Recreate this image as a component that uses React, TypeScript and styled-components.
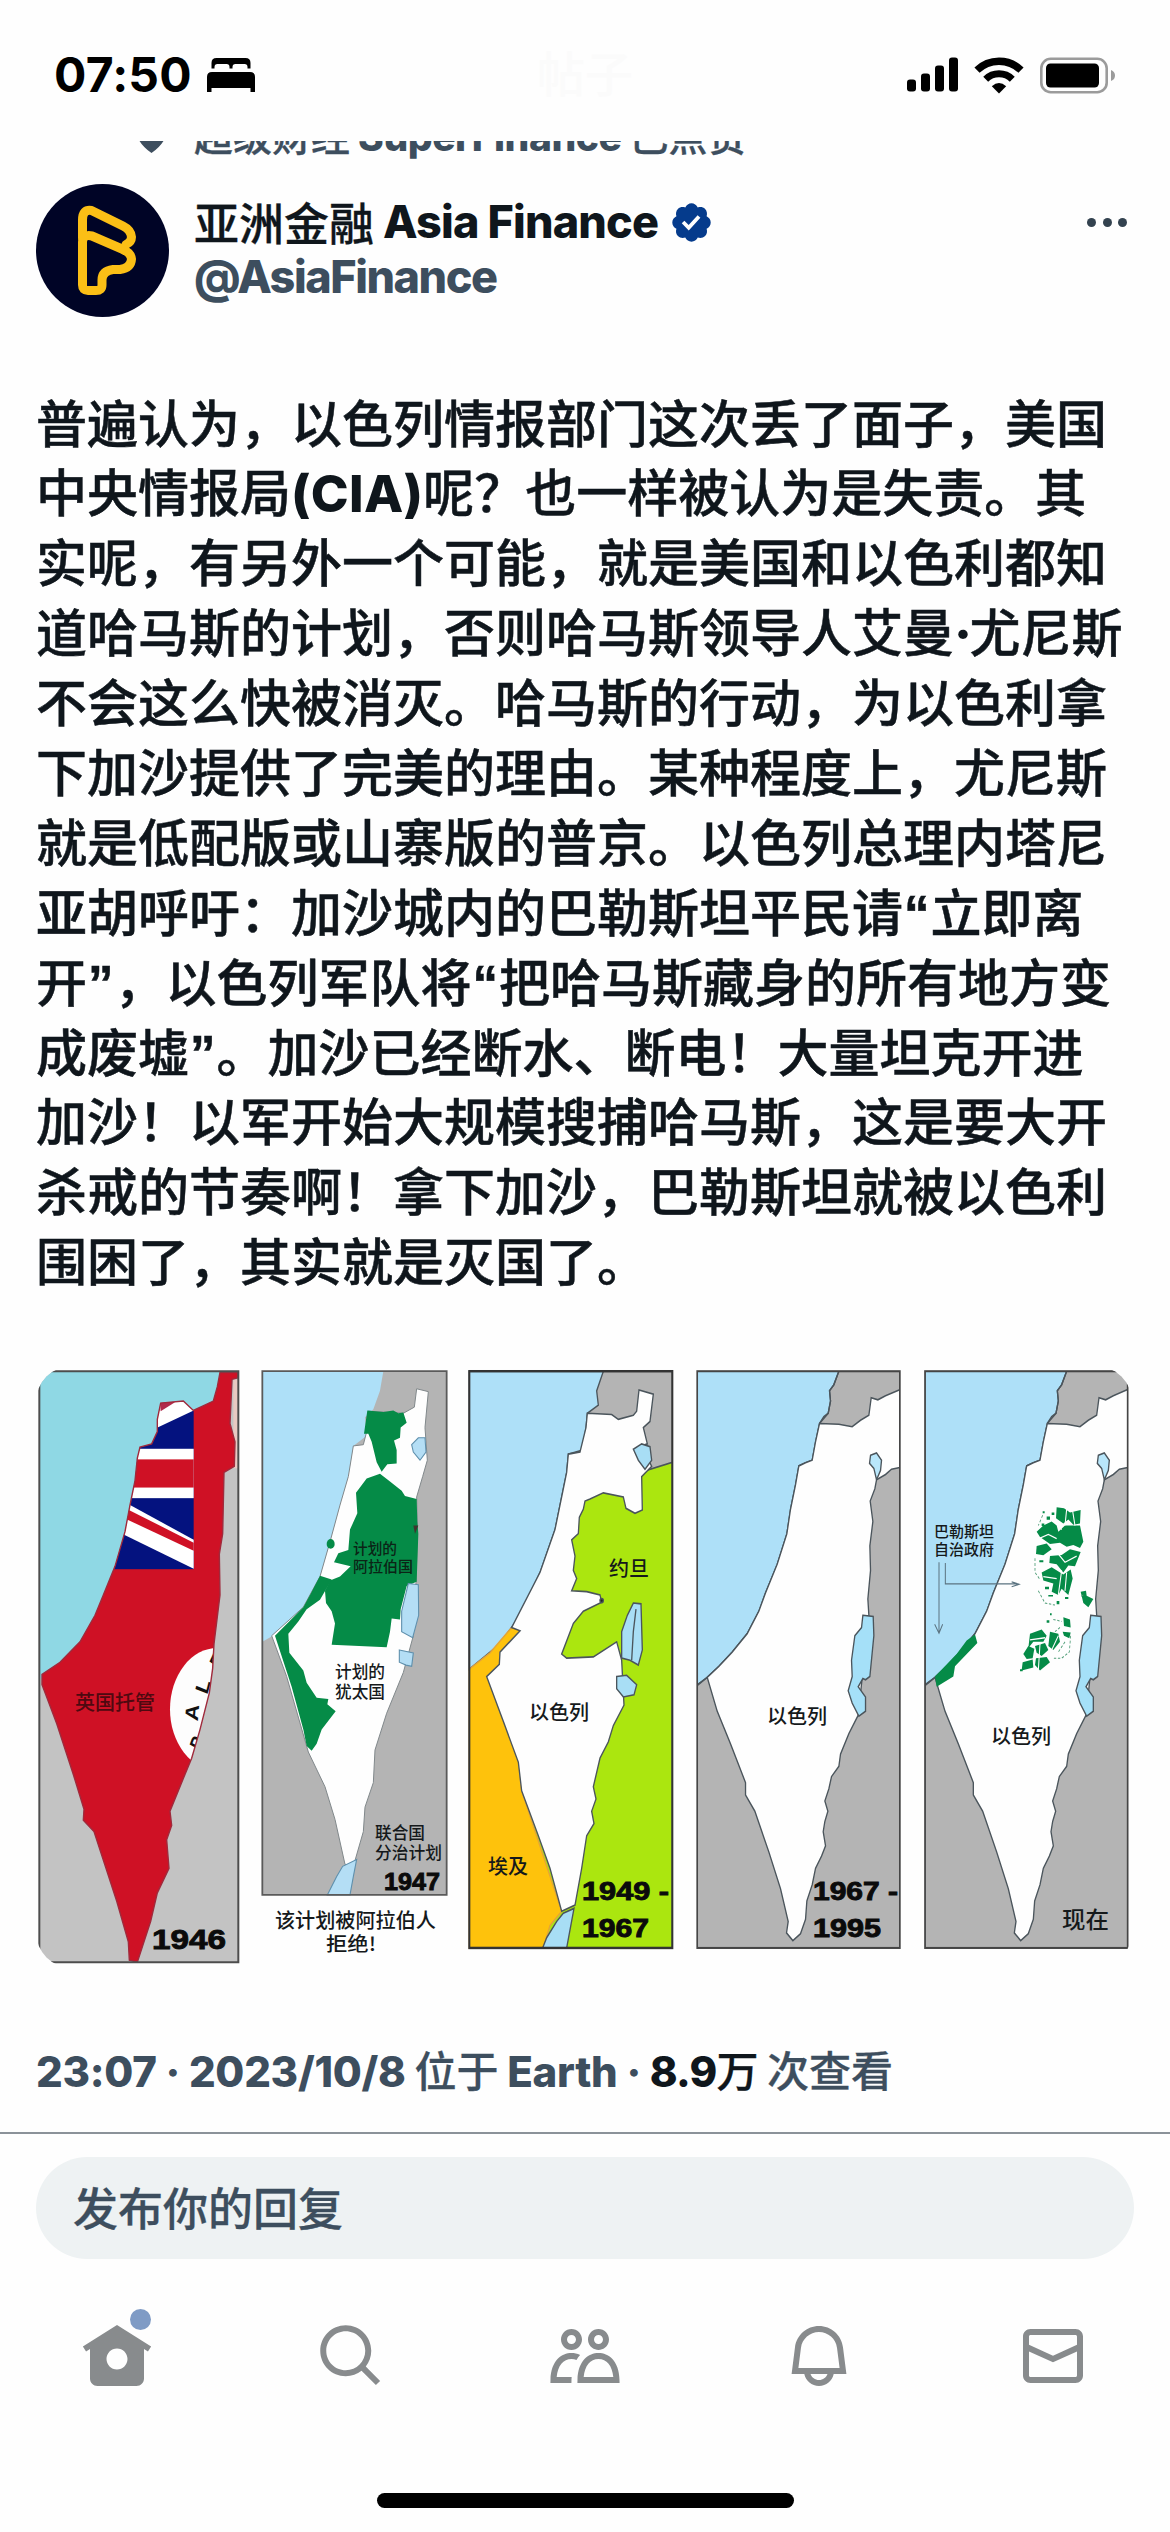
import React from "react";
import styled, { createGlobalStyle } from "styled-components";

const FONT = `Inter, "Noto Sans CJK SC", sans-serif`;
const INK = "#0f161c";
const SLATE = "#3d4e5e";

const GlobalStyle = createGlobalStyle`
  body { margin: 0; background: #fdfdfd; font-family: ${FONT}; }
  * { box-sizing: border-box; }
`;

const Screen = styled.div`
  width: 1170px;
  height: 2532px;
  display: flex;
  flex-direction: column;
  overflow: hidden;
  background: #fefefe;
`;

const StatusBar = styled.header`
  height: 141px;
  flex: none;
  display: grid;
  grid-template-columns: 1fr auto 1fr;
  align-items: start;
  padding: 45px 54px 0;
`;

const StatusLeft = styled.div`
  display: flex;
  align-items: center;
  gap: 14px;
`;

const Clock = styled.span`
  font-size: 48px;
  line-height: 60px;
  font-weight: 700;
  color: #000;
  letter-spacing: 0.2px;
`;

const GhostTitle = styled.span`
  font-size: 48px;
  line-height: 60px;
  font-weight: 500;
  color: #fbfbfb;
`;

const StatusRight = styled.div`
  display: flex;
  justify-content: flex-end;
  align-items: center;
  height: 60px;
  gap: 16px;
`;

const Post = styled.article`
  flex: none;
  height: 1991px;
  display: flex;
  flex-direction: column;
  padding: 0 36px;
`;

const LikedRow = styled.div`
  height: 43px;
  flex: none;
  display: flex;
  align-items: flex-end;
  overflow: hidden;
  padding: 0 0 22px 101px;
  gap: 28px;
  color: ${SLATE};
  font-size: 39px;
  font-weight: 700;
  line-height: 50px;
  white-space: nowrap;
  svg { flex: none; margin-bottom: 9px; }
`;

const Author = styled.div`
  display: flex;
  height: 133px;
  flex: none;
`;

const Names = styled.div`
  display: flex;
  flex-direction: column;
  margin-left: 25px;
  padding-top: 11px;
  flex: 1;
`;

const NameLine = styled.div`
  display: flex;
  align-items: center;
  height: 54px;
  font-size: 45px;
  line-height: 54px;
  color: ${INK};
  white-space: nowrap;
`;

const Handle = styled.div`
  height: 54px;
  font-size: 45px;
  line-height: 56px;
  color: ${SLATE};
  font-weight: 800;
  letter-spacing: -1.45px;
`;

const Cjk = styled.span`
  font-family: "Noto Sans CJK SC", sans-serif;
  font-weight: 500;
  -webkit-text-stroke: 0.3px currentColor;
`;

const Latin = styled.span<{ $track?: number }>`
  font-weight: 800;
  letter-spacing: ${(p) => p.$track ?? 0}px;
  white-space: pre;
`;

const MoreButton = styled.div`
  display: flex;
  gap: 6.5px;
  padding: 34px 7px 0 0;
`;

const MoreDot = styled.i`
  width: 9px;
  height: 9px;
  border-radius: 50%;
  background: #33424f;
`;

const Body = styled.div`
  margin-top: 72.5px;
  height: 908.5px;
  display: flex;
  flex-direction: column;
  flex: none;
`;

const Line = styled.p`
  margin: 0;
  height: 69.9px;
  line-height: 69.9px;
  font-size: 51px;
  font-weight: 500;
  color: ${INK};
  white-space: nowrap;
  -webkit-text-stroke: 0.5px ${INK};
`;

const Run = styled.b`
  font-weight: 800;
  letter-spacing: 0.3px;
  -webkit-text-stroke: 0;
`;

const MidDot = styled(Run)`
  letter-spacing: -2.5px;
`;

const Quote = styled.b`
  display: inline-block;
  width: 27.5px;
  text-align: center;
  font-family: "Liberation Sans", sans-serif;
  font-weight: 700;
`;

const Picture = styled.svg`
  display: block;
  flex: none;
  width: 1096px;
  height: 602px;
  margin-top: 68px;
  border-radius: 36px;
`;

const Meta = styled.div`
  margin-top: 71px;
  height: 60px;
  line-height: 60px;
  font-size: 42px;
  color: ${SLATE};
  white-space: pre;
`;

const Views = styled.span`
  color: ${INK};
`;

const ReplyDock = styled.div`
  flex: none;
  border-top: 2px solid #8b9299;
  padding: 23px 36px 0;
`;

const ReplyField = styled.div`
  height: 102px;
  border-radius: 51px;
  background: #eef2f3;
  color: ${SLATE};
  padding-left: 37px;
  font-size: 45px;
  line-height: 99px;
`;

const Tabs = styled.nav`
  flex: none;
  display: grid;
  grid-template-columns: repeat(5, 234px);
  justify-items: center;
  margin-top: 61px;
  height: 173px;
`;

const Tab = styled.div`
  position: relative;
  width: 72px;
  height: 72px;
`;

const Unread = styled.i`
  position: absolute;
  left: 49px;
  top: -11px;
  width: 21px;
  height: 21px;
  border-radius: 50%;
  background: #7f9bc5;
`;

const HomeIndicator = styled.div`
  flex: none;
  align-self: center;
  width: 417px;
  height: 15px;
  border-radius: 8px;
  background: #000;
`;

const TAB_ICONS = [
  "M12 1.696L.622 8.807l1.06 1.696L3 9.679V19.5C3 20.881 4.119 22 5.5 22h13c1.381 0 2.5-1.119 2.5-2.5V9.679l1.318.824 1.06-1.696L12 1.696zM12 16.5c-1.933 0-3.5-1.567-3.5-3.5s1.567-3.5 3.5-3.5 3.5 1.567 3.5 3.5-1.567 3.5-3.5 3.5z",
  "M10.25 3.75c-3.59 0-6.5 2.91-6.5 6.5s2.91 6.5 6.5 6.5c1.795 0 3.419-.726 4.596-1.904 1.178-1.177 1.904-2.801 1.904-4.596 0-3.59-2.91-6.5-6.5-6.5zm-8.5 6.5c0-4.694 3.806-8.5 8.5-8.5s8.5 3.806 8.5 8.5c0 1.986-.682 3.815-1.824 5.262l4.781 4.781-1.414 1.414-4.781-4.781c-1.447 1.142-3.276 1.824-5.262 1.824-4.694 0-8.5-3.806-8.5-8.5z",
  "M7.501 19.917L7.471 21H.472l.029-1.027c.184-6.618 3.736-8.977 7-8.977.963 0 1.95.212 2.87.672-.444.478-.851 1.03-1.212 1.656-.507-.204-1.054-.329-1.658-.329-2.767 0-4.57 2.223-4.938 6.004H7.56c-.023.302-.05.599-.059.918zm15.998.056L23.528 21H9.472l.029-1.027c.184-6.618 3.736-8.977 7-8.977s6.816 2.358 7 8.977zM21.437 19c-.367-3.781-2.17-6.004-4.938-6.004s-4.57 2.223-4.938 6.004h9.875zm-4.938-9c-.799 0-1.527-.279-2.116-.73-.836-.64-1.384-1.638-1.384-2.77 0-1.93 1.567-3.5 3.5-3.5s3.5 1.57 3.5 3.5c0 1.132-.548 2.13-1.384 2.77-.589.451-1.317.73-2.116.73zm-1.5-3.5c0 .827.673 1.5 1.5 1.5s1.5-.673 1.5-1.5-.673-1.5-1.5-1.5-1.5.673-1.5 1.5zM7.5 3C9.433 3 11 4.57 11 6.5S9.433 10 7.5 10 4 8.43 4 6.5 5.567 3 7.5 3zm0 2C6.673 5 6 5.673 6 6.5S6.673 8 7.5 8 9 7.327 9 6.5 8.327 5 7.5 5z",
  "M19.993 9.042C19.48 5.017 16.054 2 11.996 2s-7.49 3.021-7.999 7.051L2.866 18H7.1c.463 2.282 2.481 4 4.9 4s4.437-1.718 4.9-4h4.236l-1.143-8.958zM12 20c-1.306 0-2.417-.835-2.829-2h5.658c-.412 1.165-1.523 2-2.829 2zm-6.866-4l.847-6.698C6.364 6.272 8.941 4 11.996 4s5.627 2.268 6.013 5.295L18.864 16H5.134z",
  "M1.998 5.5c0-1.381 1.119-2.5 2.5-2.5h15c1.381 0 2.5 1.119 2.5 2.5v13c0 1.381-1.119 2.5-2.5 2.5h-15c-1.381 0-2.5-1.119-2.5-2.5v-13zm2.5-.5c-.276 0-.5.224-.5.5v2.764l8 3.638 8-3.636V5.5c0-.276-.224-.5-.5-.5h-15zm15.5 5.463l-8 3.636-8-3.638V18.5c0 .276.224.5.5.5h15c.276 0 .5-.224.5-.5v-8.037z",
];

const BedIcon = () => (
  <svg width="50" height="36" viewBox="0 0 50 36">
    <path d="M5.500 11.500V6Q5.500 1 10.500 1H39.500Q44.500 1 44.500 6V11.500H41.500V10Q41.500 7 38.500 7H29.500Q26.500 7 26.500 10V11.500H23.500V10Q23.500 7 20.500 7H11.500Q8.500 7 8.500 10V11.500Z" />
    <path d="M1 20Q1 15 6 15H44Q49 15 49 20V35H44.500V31H5.500V35H1Z" />
  </svg>
);

const SignalIcon = () => (
  <svg width="51" height="36" viewBox="0 0 51 36">
    <rect x="0" y="22.500" width="9" height="12" rx="3" />
    <rect x="14" y="16.500" width="9" height="18" rx="3" />
    <rect x="28" y="8.500" width="9" height="26" rx="3" />
    <rect x="42" y="0.500" width="9" height="34" rx="3" />
  </svg>
);

const WifiIcon = () => (
  <svg width="50" height="38" viewBox="0 0 50 38">
    <g fill="none" stroke="#000">
      <path d="M3 14.200a31.500 31.500 0 0 1 44 0" strokeWidth="7.400" />
      <path d="M11.700 23.200a19 19 0 0 1 26.600 0" strokeWidth="7" />
    </g>
    <path d="M25 37.500 17.800 30.200Q25 24 32.200 30.200Z" strokeLinejoin="round" />
  </svg>
);

const BatteryIcon = () => (
  <svg width="76" height="37" viewBox="0 0 76 37">
    <rect x="1.300" y="1.800" width="65.400" height="33.400" rx="9.500" fill="none" stroke="#9b9b9b" strokeWidth="2.600" />
    <rect x="6" y="6.500" width="53" height="24" rx="4.500" />
    <path d="M71 13q4 1.500 4 5.500t-4 5.500z" fill="#9b9b9b" />
  </svg>
);

const Avatar = () => (
  <svg width="133" height="133" viewBox="0 0 133 133">
    <circle cx="66.500" cy="66.500" r="66.500" fill="#000426" />
    <g fill="none" stroke="#fbbf16" strokeWidth="9" strokeLinejoin="round" strokeLinecap="round">
      <path d="M46.500 54V36Q46.500 25 55.500 26.500L87 42Q95 46 95.500 53Q95.500 58 90 60.500" />
      <path d="M46.500 58Q47 50 56 52L86 65Q95 69 95.500 75Q95 84 84 85.500H77Q66 87 66 96V101Q66 106.500 60 106.500H52Q46.500 106.500 46.500 101Z" />
    </g>
  </svg>
);

const VerifiedMark = styled.svg`
  width: 45px;
  height: 45px;
  margin-left: 11px;
`;

const VerifiedIcon = () => (
  <VerifiedMark viewBox="0 0 24 24">
    <path
      fill="#053b8c"
      d="M22.25 12c0-1.430-.88-2.670-2.190-3.340.46-1.390.2-2.900-.81-3.910s-2.520-1.270-3.910-.81c-.66-1.310-1.910-2.190-3.340-2.190s-2.670.88-3.330 2.190c-1.400-.46-2.910-.2-3.920.81s-1.260 2.520-.8 3.910c-1.310.67-2.200 1.910-2.200 3.340s.89 2.670 2.200 3.340c-.46 1.390-.21 2.900.8 3.910s2.520 1.260 3.910.81c.67 1.310 1.910 2.190 3.340 2.190s2.680-.88 3.340-2.190c1.390.45 2.900.2 3.910-.81s1.270-2.520.81-3.910c1.310-.67 2.190-1.910 2.190-3.340zm-11.710 4.200L6.800 12.460l1.410-1.420 2.260 2.260 4.800-5.230 1.470 1.360-6.200 6.770z"
    />
  </VerifiedMark>
);

const SEA = "#aee0f8";
const GREY = "#b4b4b4";
const GREEN = "#058b47";
const LINE = "#4b555c";

interface LabelProps {
  x: number;
  y: number;
  w: number;
  size: number;
  fill?: string;
  children: string;
}

/* Place name, stretched to the width it takes on the map. */
const Place = ({ x, y, w, size, fill = "#15191b", children }: LabelProps) => (
  <text x={x} y={y} textLength={w} lengthAdjust="spacingAndGlyphs" fontFamily='"Noto Sans CJK SC", sans-serif' fontWeight="500" fontSize={size} fill={fill}>
    {children}
  </text>
);

const Year = ({ x, y, w, size, children }: LabelProps) => (
  <text x={x} y={y} textLength={w} lengthAdjust="spacingAndGlyphs" fontFamily='"Liberation Sans", Arial, sans-serif' fontWeight="700" fontSize={size} fill="#0b0b0b" stroke="#0b0b0b" strokeWidth="0.9">
    {children}
  </text>
);

const LAND_1946 =
  "M600 55L655 55 655 68 636 72 630 180 645 225 643 285 612 300 608 450 598 500 600 600 582 720 578 780 568 840 540 930 515 1000 490 1050 450 1130 455 1165 440 1200 447 1270 412 1330 392 1400 352 1500 328 1495 325 1450 290 1350 222 1180 190 1152 192 1125 160 1040 110 915 66 820 66 795 120 765 180 715 225 650 250 600 285 530 315 445 330 380 345 320 352 265 360 238 395 230 412 200 412 170 422 130 490 125 520 148 580 125 592 90Z";

const COAST_1967 =
  "1042 180 1030 225 1020 270 1000 276 980 284 970 330 955 390 944 450 915 525 880 595 860 640 825 695 780 740 740 775 705 802";

const Territory1967 = () => (
  <>
    <rect x="675" y="52" width="608" height="1413" fill={GREY} />
    <path d={`M675 52H1100L1085 85 1072 100 1075 125 1068 155 1055 163L${COAST_1967} 675 820Z`} fill={SEA} />
    <path d="M1100 52L1085 85 1072 100 1075 125 1068 155 1042 180M705 802L675 822" fill="none" />
    <path
      d={`M${COAST_1967} 735 885 775 965 820 1060 820 1090 848 1130 890 1230 925 1320 948 1400 943 1428 962 1447 985 1430 1000 1395 1004 1350 1020 1310 1030 1270 1048 1240 1060 1215 1053 1180 1058 1155 1067 1130 1058 1105 1070 1075 1078 1045 1100 1020 1105 990 1130 940 1158 895 1190 650 1187 610 1195 540 1193 480 1202 420 1194 370 1208 340 1213 318 1240 305 1258 292 1283 288 1283 97 1240 112 1217 122 1197 117 1190 160 1165 172 1140 188 1100 182Z`}
      fill="#fefefe"
    />
    <path d="M1195 258L1213 252 1228 270 1225 295 1213 318 1205 290 1192 278Z" fill="#b9e7fb" />
    <path d="M1172 650L1203 653 1205 700 1193 800 1180 808 1172 805 1158 825 1180 850 1180 885 1160 897 1140 865 1128 835 1140 800 1138 760 1148 700 1168 680Z" fill="#a5e0f8" />
  </>
);

const TerritoryMap = () => (
  <Picture viewBox="36 1366 1096 602">
    <rect x="36" y="1366" width="1096" height="602" fill="#fefefe" />
    <defs>
      <clipPath id="mandate"><path d={LAND_1946} /></clipPath>
      <clipPath id="modern"><rect x="675" y="52" width="608" height="1413" /></clipPath>
    </defs>

    <g transform="translate(20 1350) scale(.33333 .40816)">
      <rect x="58" y="52" width="597" height="1448" fill="#c3c3c3" />
      <path d="M58 52H610L600 140 500 240 400 500 250 720 66 810 58 800Z" fill="#8fd8e4" />
      <path d="M640 72H655V290H640Z" fill="#e8c9c2" />
      <path d={LAND_1946} fill="#cf1125" />
      <g clipPath="url(#mandate)">
        <rect x="270" y="110" width="251" height="427" fill="#04127f" />
        <path d="M400 195L521 148V110H400Z" fill="#fff" />
        <path d="M420 120L465 128 422 150Z" fill="#b12b4c" />
        <rect x="330" y="242" width="191" height="121" fill="#fff" />
        <rect x="330" y="268" width="191" height="69" fill="#cf1125" />
        <path d="M322 376L521 465V536L300 448Z" fill="#fff" />
        <path d="M322 390L521 472V492L318 414Z" fill="#cf1125" />
        <ellipse cx="592" cy="880" rx="142" ry="150" fill="#fdfdfd" />
        <g fontFamily='"Liberation Sans", sans-serif' fontWeight="700" fontSize="56" fill="#111">
          <text transform="translate(543 985) rotate(-66) scale(.8 1)">P</text>
          <text transform="translate(533 910) rotate(-84)">A</text>
          <text transform="translate(562 846) rotate(-72)">L</text>
          <text transform="translate(600 786) rotate(-60)">E</text>
        </g>
      </g>
      <path d={LAND_1946} fill="none" stroke="#a02a3c" strokeWidth="1.400" vectorEffect="non-scaling-stroke" />
      <rect x="58" y="52" width="597" height="1448" fill="none" stroke="#4d4d4d" strokeWidth="2" vectorEffect="non-scaling-stroke" />

      <rect x="727" y="52" width="553" height="1283" fill={GREY} />
      <path d="M727 52H1090L1080 100 1060 145 1035 165 1040 210 1000 235 985 310 960 380 930 470 900 555 850 630 780 690 727 715Z" fill={SEA} />
      <path d="M1045 150L1150 155 1183 140 1190 95 1225 102 1215 190 1222 270 1208 310 1190 360 1192 450 1188 570 1180 700 1150 790 1100 890 1065 980 1060 1060 1035 1120 1030 1180 1000 1265 975 1260 945 1150 915 1070 865 985 800 800 755 700 850 630 900 555 930 470 960 380 985 310 1000 235 1030 232 1040 200Z" fill="#fefefe" stroke="#81888b" strokeWidth="1" vectorEffect="non-scaling-stroke" />
      <g fill={GREEN}>
        <path d="M1042 148L1090 152 1120 148 1135 155 1150 153 1160 178 1142 190 1140 215 1122 222 1130 245 1130 278 1102 280 1085 298 1070 275 1055 225 1045 205 1032 205Z" />
        <path d="M1080 303L1110 322 1145 345 1155 358 1190 365 1192 420 1195 450 1190 568 1160 578 1142 635 1140 660 1115 658 1110 690 1100 728 935 722 945 670 935 640 918 620 915 590 930 565 960 555 992 530 942 520 955 498 985 490 990 440 1012 400 1008 350 1040 315Z" />
        <path d="M765 700L850 630 870 600 900 553 935 562 900 612 860 635 835 665 805 695 808 742 850 785 860 815 890 852 925 855 922 868 947 885 905 930 890 965 875 982 860 970 850 930 815 825Z" />
        <circle cx="932" cy="475" r="12" />
      </g>
      <path d="M1180 430L1195 430 1185 450Z" fill="#3f352f" />
      <g fill="#b4def5" stroke="#5f90ad" strokeWidth="1.100">
        <path vectorEffect="non-scaling-stroke" d="M1175 232L1195 215 1215 215 1218 250 1200 270 1180 250Z" />
        <path vectorEffect="non-scaling-stroke" d="M1165 572L1195 575 1196 650 1178 705 1145 690 1145 640Z" />
        <path vectorEffect="non-scaling-stroke" d="M1138 735L1180 742 1175 775 1158 772 1138 765Z" />
        <path vectorEffect="non-scaling-stroke" d="M1010 1248L1000 1290 990 1335 922 1335 950 1290 968 1265Z" />
      </g>
      <rect x="727" y="52" width="553" height="1283" fill="none" stroke="#5a5a5a" strokeWidth="1.800" vectorEffect="non-scaling-stroke" />
    </g>

    <g transform="translate(440 1350) scale(.33333 .40816)" stroke={LINE} strokeWidth="4">
      <rect x="88" y="52" width="609" height="1413" fill="#abe60f" />
      <path d="M440 52H697V275L620 295 430 200Z" fill={GREY} />
      <path d="M88 52H490L470 100 475 135 442 155 438 190 428 245 385 255 380 300 370 340 345 440 300 545 240 650 180 720 88 782Z" fill={SEA} />
      <path d="M88 782L150 742 215 680 245 688 180 740 178 770 142 800 190 900 235 1000 245 1080 365 1375 330 1410 310 1465H88Z" fill="#fec20c" stroke="#e3a43a" />
      <path
        d="M442 155L515 158 535 170 580 160 590 150 597 98 640 108 630 175 610 190 622 230 605 235 635 285 605 310 607 392 585 400 558 388 550 360 490 350 450 365 435 370 430 390 418 410 415 450 395 465 405 505 400 540 410 560 395 590 440 592 480 600 485 618 430 640 400 670 365 745 380 755 460 752 530 715 545 760 552 870 520 920 505 960 480 1000 460 1070 468 1100 455 1130 462 1160 440 1190 425 1270 405 1360 365 1375 330 1270 295 1190 245 1080 235 1010 190 910 140 800 178 770 180 740 240 688 215 680 300 545 345 440 370 340 380 300 385 255 420 250 438 190Z"
        fill="#fefefe"
      />
      <path d="M580 243L605 230 630 237 635 270 615 292 595 270Z" fill="#a8def5" />
      <path d="M580 620L603 622 607 735 595 772 570 760 545 755 545 690 562 650Z" fill="#a8def5" />
      <path d="M588 635L580 690 575 760" fill="none" />
      <path d="M530 800L560 797 590 820 582 845 550 850 530 830Z" fill="#a8def5" />
      <path d="M402 1368L380 1465 308 1465 320 1440 350 1400 370 1380Z" fill="#a8def5" />
      <circle cx="485" cy="614" r="5" fill="#222" />
      <rect x="88" y="52" width="609" height="1413" fill="none" stroke="#333" strokeWidth="6" />
    </g>

    <g transform="translate(472.200 1350) scale(.33333 .40816)" stroke={LINE} strokeWidth="4">
      <g clipPath="url(#modern)"><Territory1967 /></g>
      <rect x="675" y="52" width="608" height="1413" fill="none" stroke="#454545" strokeWidth="5" />
    </g>

    <g transform="translate(700 1350) scale(.33333 .40816)" stroke={LINE} strokeWidth="4">
      <g clipPath="url(#modern)"><Territory1967 /></g>
      <g fill={GREEN} stroke="none">
        <path d="M825 697L832 718 765 775 760 800 710 825 705 800 770 745 800 712Z" />
        <path d="M1070 385L1092 388 1110 398 1142 392 1140 425 1120 428 1105 415 1090 425 1068 412Z" />
        <path d="M1030 430L1055 420 1070 430 1075 445 1095 430 1140 430 1150 470 1140 485 1120 478 1100 482 1080 472 1050 475 1020 458 1010 445Z" />
        <path d="M1010 480L1040 474 1055 488 1030 503 1008 500Z" />
        <path d="M1050 505L1085 502 1110 488 1142 495 1125 530 1105 528 1090 545 1070 525 1048 522Z" />
        <path d="M1025 545L1055 532 1090 550 1112 538 1118 560 1105 600 1085 585 1075 600 1055 592 1060 572 1030 565Z" />
        <path d="M1142 592L1158 590 1160 602 1180 610 1165 630 1150 620Z" />
        <path d="M990 695L1025 685 1040 700 1030 715 1000 715 985 730Z" />
        <path d="M1050 690L1075 695 1080 715 1060 735 1045 725Z" />
        <path d="M1005 725L1035 718 1045 735 1025 750 1010 742Z" />
        <path d="M985 725L1003 732 998 755 980 757 970 745Z" />
        <path d="M968 765L998 758 1000 778 965 785Z" />
        <path d="M1008 755L1040 752 1050 765 1020 785 1005 772Z" />
        <path d="M1090 655L1110 660 1112 680 1092 676ZM1088 690L1112 692 1108 706 1092 700Z" />
        <path d="M1040 408h10v8h-10zM1055 398h8v6h-8zM1025 425h8v6h-8zM1018 515h12v5h-12zM1035 580h12v6h-12zM1045 600h14v4h-14zM1070 615h8v8h-8zM1040 662h8v6h-8zM1095 605h10v5h-10zM960 782h8v5h-8zM1028 395h6v5h-6zM1050 645h5v5h-5z" />
      </g>
      <g fill="none" stroke="#fefefe" strokeWidth="3.200">
        <path d="M1008 465L1045 452 1070 462M1060 410L1085 440M1100 390L1095 430M1118 395L1125 430M1075 500L1095 520 1130 505M1030 555L1070 560M1085 540L1075 600M1100 545L1095 590M990 710L1035 705M1020 720L1015 785M1055 735L1075 700" />
      </g>
      <g fill="none" stroke="#4f9d77" strokeWidth="2.500" strokeDasharray="7 5">
        <path d="M1005 510L1005 545 1018 560M1015 590L1035 620 1065 625M1080 680L1065 690M1112 700L1108 740 1085 755 1060 755M1095 715L1075 740M1060 660L1085 665M1150 600L1140 605M1028 405L1015 430" />
      </g>
      <g fill="none" stroke="#5b7380" strokeWidth="3">
        <path d="M717 520V692M704 672L717 694 728 672M736 522V573H955M935 568L957 574 935 580" />
      </g>
      <rect x="675" y="52" width="608" height="1413" fill="none" stroke="#454545" strokeWidth="5" />
    </g>

    <Place x={75} y={1710} w={80} size={20} fill="#4e0910">英国托管</Place>
    <Year x={152} y={1949} w={74} size={28}>1946</Year>
    <Place x={353} y={1554} w={44} size={15} fill="#0b2416">计划的</Place>
    <Place x={353} y={1571.500} w={60} size={15} fill="#0b2416">阿拉伯国</Place>
    <Place x={335} y={1677.500} w={50} size={17}>计划的</Place>
    <Place x={335} y={1698} w={50} size={17}>犹太国</Place>
    <Place x={375} y={1838.500} w={50} size={17}>联合国</Place>
    <Place x={375} y={1859} w={67} size={17}>分治计划</Place>
    <Year x={384} y={1890} w={56} size={24}>1947</Year>
    <Place x={275} y={1927.500} w={161} size={20}>该计划被阿拉伯人</Place>
    <Place x={326} y={1951} w={50} size={19}>拒绝!</Place>
    <Place x={609} y={1576} w={40} size={20}>约旦</Place>
    <Place x={529} y={1719.500} w={60} size={20}>以色列</Place>
    <Place x={488} y={1873.500} w={40} size={20}>埃及</Place>
    <Year x={582} y={1900} w={87} size={25}>1949 -</Year>
    <Year x={582} y={1936.500} w={67} size={25}>1967</Year>
    <Place x={767} y={1723.500} w={60} size={20}>以色列</Place>
    <Year x={813} y={1900} w={85} size={25}>1967 -</Year>
    <Year x={813} y={1936.500} w={68} size={25}>1995</Year>
    <Place x={934} y={1536.500} w={60} size={15}>巴勒斯坦</Place>
    <Place x={934} y={1555} w={60} size={15}>自治政府</Place>
    <Place x={991} y={1743.500} w={60} size={20}>以色列</Place>
    <Place x={1062} y={1928} w={47} size={23}>现在</Place>
  </Picture>
);

export default function App() {
  return (
    <>
      <GlobalStyle />
      <Screen>
        <StatusBar>
          <StatusLeft>
            <Clock>07:50</Clock>
            <BedIcon />
          </StatusLeft>
          <GhostTitle>帖子</GhostTitle>
          <StatusRight>
            <SignalIcon />
            <WifiIcon />
            <BatteryIcon />
          </StatusRight>
        </StatusBar>

        <Post>
          <LikedRow>
            <svg width="29" height="28" viewBox="0 0 29 28">
              <path d="M0 11Q4 21 14.500 28Q25 21 29 11Q29 0 20 0Q16 0 14.500 4Q13 0 9 0Q0 0 0 11Z" fill={SLATE} />
            </svg>
            <span>
              <Cjk>超级财经</Cjk>
              <Latin $track={-0.45}> SuperFinance </Latin>
              <Cjk>已点赞</Cjk>
            </span>
          </LikedRow>

          <Author>
            <Avatar />
            <Names>
              <NameLine>
                <Cjk>亚洲金融</Cjk>
                <Latin $track={-0.85}> Asia Finance</Latin>
                <VerifiedIcon />
              </NameLine>
              <Handle>@AsiaFinance</Handle>
            </Names>
            <MoreButton>
              <MoreDot />
              <MoreDot />
              <MoreDot />
            </MoreButton>
          </Author>

          <Body>
            <Line>普遍认为，以色列情报部门这次丢了面子，美国</Line>
            <Line>中央情报局<Run>(CIA)</Run>呢？也一样被认为是失责。其</Line>
            <Line>实呢，有另外一个可能，就是美国和以色利都知</Line>
            <Line>道哈马斯的计划，否则哈马斯领导人艾曼<MidDot>·</MidDot>尤尼斯</Line>
            <Line>不会这么快被消灭。哈马斯的行动，为以色利拿</Line>
            <Line>下加沙提供了完美的理由。某种程度上，尤尼斯</Line>
            <Line>就是低配版或山寨版的普京。以色列总理内塔尼</Line>
            <Line>亚胡呼吁：加沙城内的巴勒斯坦平民请<Quote>“</Quote>立即离</Line>
            <Line>开<Quote>”</Quote>，以色列军队将<Quote>“</Quote>把哈马斯藏身的所有地方变</Line>
            <Line>成废墟<Quote>”</Quote>。加沙已经断水、断电！大量坦克开进</Line>
            <Line>加沙！以军开始大规模搜捕哈马斯，这是要大开</Line>
            <Line>杀戒的节奏啊！拿下加沙，巴勒斯坦就被以色利</Line>
            <Line>围困了，其实就是灭国了。</Line>
          </Body>

          <TerritoryMap />

          <Meta>
            <Latin $track={-0.3}>23:07 · 2023/10/8 </Latin>
            <Cjk>位于</Cjk>
            <Latin $track={-0.3}> Earth · </Latin>
            <Views>
              <Latin $track={-0.8}>8.9</Latin>
              <Cjk>万</Cjk>
            </Views>
            <Latin $track={-0.5}> </Latin>
            <Cjk>次查看</Cjk>
          </Meta>
        </Post>

        <ReplyDock>
          <ReplyField>
            <Cjk>发布你的回复</Cjk>
          </ReplyField>
        </ReplyDock>

        <Tabs>
          {TAB_ICONS.map((d, i) => (
            <Tab key={i}>
              <svg width="72" height="72" viewBox="0 0 24 24" fill="#888b8d">
                <path d={d} />
              </svg>
              {i === 0 && <Unread />}
            </Tab>
          ))}
        </Tabs>
        <HomeIndicator />
      </Screen>
    </>
  );
}
